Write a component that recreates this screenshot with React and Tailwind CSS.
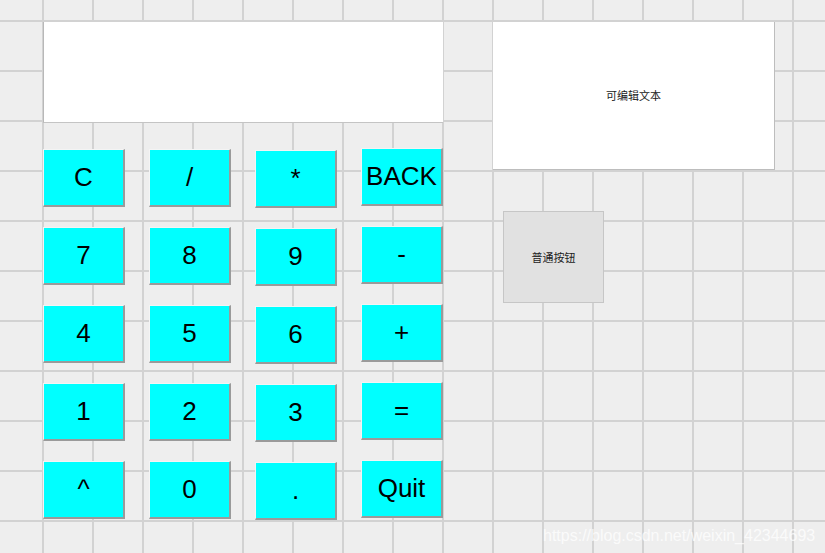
import React from 'react';

const columns = [
  ['C', '7', '4', '1', '^'],
  ['/', '8', '5', '2', '0'],
  ['*', '9', '6', '3', '.'],
  ['BACK', '-', '+', '=', 'Quit'],
];

// small vertical offsets per column, as placed in the editor
const colOffset = ['mt-[26px]', 'mt-[26px]', 'mt-[27px]', 'mt-[25px]'];

function CalcKey({ label }) {
  return (
    <button className="w-[82px] h-[58px] bg-[#00ffff] border-t border-l border-b-2 border-r-2 border-t-[#f4f4f4] border-l-[#f4f4f4] border-b-[#9a9a9a] border-r-[#9a9a9a] flex items-center justify-center pb-[1px] text-[26px] leading-none text-black font-['Liberation_Sans',Arial,sans-serif]">
      {label}
    </button>
  );
}

export default function App() {
  return (
    <div className="relative w-[825px] h-[553px] overflow-hidden bg-[#eeeeee] bg-[linear-gradient(to_right,#d2d2d2_2px,transparent_2px),linear-gradient(to_bottom,#d2d2d2_2px,transparent_2px)] bg-[size:50px_50px] bg-[position:42px_20px] font-['Liberation_Sans',Arial,sans-serif]">
      <div className="flex pl-[43px] pt-[22px]">
        {/* Calculator */}
        <div className="w-[400px] flex flex-col">
          <div className="h-[101px] bg-white border-l border-b border-l-[#b8b8b8] border-b-[#c4c4c4]" />
          <div className="flex gap-[24px]">
            {columns.map((col, i) => (
              <div key={i} className={`flex flex-col gap-[20px] ${colOffset[i]}`}>
                {col.map((k) => (
                  <CalcKey key={k} label={k} />
                ))}
              </div>
            ))}
          </div>
        </div>

        {/* Right side widgets */}
        <div className="ml-[50px] flex flex-col">
          <div className="w-[282px] h-[148px] bg-white border-r border-b border-[#bdbdbd] flex items-center justify-center text-[11px] text-[#222] font-['Noto_Sans_CJK_SC',sans-serif]">
            可编辑文本
          </div>
          <div className="ml-[10px] mt-[41px] w-[101px] h-[92px] bg-[#e1e1e1] border border-[#c6c6c6] flex items-center justify-center text-[11px] text-[#222] font-['Noto_Sans_CJK_SC',sans-serif]">
            普通按钮
          </div>
        </div>
      </div>

      <div className="absolute left-[543px] top-[524px] text-[16px] text-white/75">
        https://blog.csdn.net/weixin_42344693
      </div>
    </div>
  );
}
